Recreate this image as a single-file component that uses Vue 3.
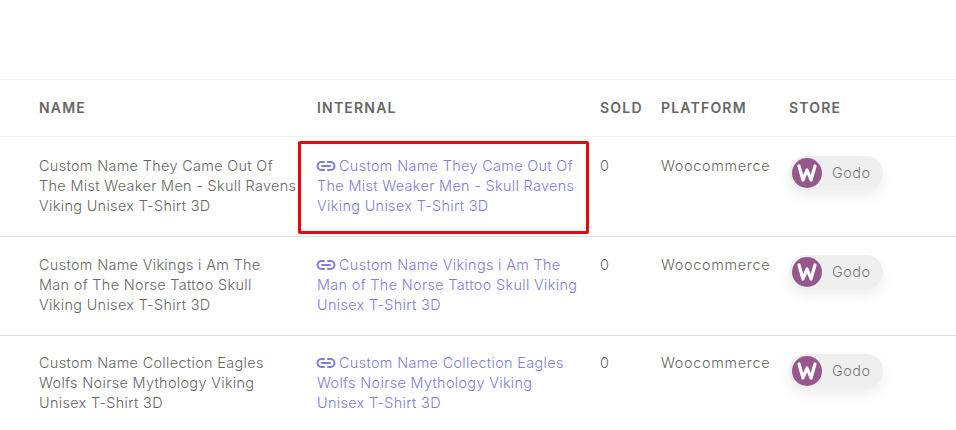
<script setup>
const rows = [
  { lines: ['Custom Name They Came Out Of', 'The Mist Weaker Men - Skull Ravens', 'Viking Unisex T-Shirt 3D'], linkLines: ['Custom Name They Came Out Of', 'The Mist Weaker Men - Skull Ravens', 'Viking Unisex T-Shirt 3D'], marked: true },
  { lines: ['Custom Name Vikings i Am The', 'Man of The Norse Tattoo Skull', 'Viking Unisex T-Shirt 3D'], linkLines: ['Custom Name Vikings i Am The', 'Man of The Norse Tattoo Skull Viking', 'Unisex T-Shirt 3D'], marked: false },
  { lines: ['Custom Name Collection Eagles', 'Wolfs Noirse Mythology Viking', 'Unisex T-Shirt 3D'], linkLines: ['Custom Name Collection Eagles', 'Wolfs Noirse Mythology Viking', 'Unisex T-Shirt 3D'], marked: false },
]
</script>

<template>
  <div class="page">
    <div class="grid head">
      <div class="name">NAME</div>
      <div>INTERNAL</div>
      <div>SOLD</div>
      <div>PLATFORM</div>
      <div>STORE</div>
    </div>
    <div v-for="(r, i) in rows" :key="i" class="grid row" :class="'row' + (i + 1)">
      <div class="name cell">
        <div v-for="l in r.lines" :key="l">{{ l }}</div>
      </div>
      <div class="cell link">
        <div v-if="r.marked" class="mark"></div>
        <div v-for="(l, j) in r.linkLines" :key="l">
          <svg v-if="j === 0" class="chain" viewBox="0 0 20 12" width="20" height="12" fill="none" stroke="currentColor" stroke-width="2" stroke-linecap="round">
            <path d="M8 2H5.500a4 4 0 0 0 0 8H8" />
            <path d="M12 2h2.500a4 4 0 0 1 0 8H12" />
            <path d="M6 6h8" />
          </svg>{{ l }}
        </div>
      </div>
      <div class="cell">0</div>
      <div class="cell platform">Woocommerce</div>
      <div class="store">
        <div class="chip">
          <svg class="logo" viewBox="0 0 30 30" width="30" height="30">
            <circle cx="15" cy="15" r="15" fill="#96588a" />
            <path d="M7 8l4 14 4-10 4 10 4-14" fill="none" stroke="#fff" stroke-width="3.200" stroke-linejoin="round" stroke-linecap="round" />
          </svg>
          <span>Godo</span>
        </div>
      </div>
    </div>
  </div>
</template>

<style>
html, body { margin: 0; background: #fff; }
</style>

<style scoped>
.page {
  width: 956px;
  height: 430px;
  overflow: hidden;
  padding-top: 79px;
  box-sizing: border-box;
  font-family: "Inter", "Open Sans", sans-serif;
  font-size: 14.4px;
  font-weight: 300;
  line-height: 20px;
  color: #666;
  letter-spacing: 0.35px;
}
.grid {
  display: grid;
  grid-template-columns: 317px 283px 61px 128px 1fr;
}
.name { padding-left: 39px; }
.head {
  height: 58px;
  box-sizing: border-box;
  padding-bottom: 1px;
  align-items: center;
  border-top: 1px solid #f3f3f3;
  border-bottom: 1px solid #f1f1f1;
  font-size: 14px;
  font-weight: 600;
  letter-spacing: 1.2px;
  color: #666;
}
.row {
  height: 99px;
  box-sizing: border-box;
  border-bottom: 1px solid #e2e2e2;
}
.row1 { height: 100px; }
.cell {
  padding-top: 18px;
  white-space: nowrap;
}
.row1 .cell { padding-top: 19px; }
.row3 .cell { padding-top: 17px; }
.link {
  position: relative;
  color: #837cd6;
}
.platform { letter-spacing: 0.7px; }
.chain {
  vertical-align: -1px;
  margin-left: -1px;
  margin-right: 3px;
}
.mark {
  position: absolute;
  left: -19px;
  top: 4px;
  width: 291px;
  height: 93px;
  box-sizing: border-box;
  border: 3px solid #e00b0b;
  border-radius: 2px;
}
.store { padding-top: 18px; }
.row1 .store { padding-top: 19px; }
.chip {
  display: inline-flex;
  align-items: center;
  gap: 10px;
  width: 94px;
  height: 34px;
  box-sizing: border-box;
  padding-left: 3px;
  border-radius: 17px;
  background: #efefef;
  box-shadow: 0 6px 14px rgba(0, 0, 0, 0.07);
  color: #777;
  letter-spacing: 0.5px;
}
.logo { flex: none; }
</style>
